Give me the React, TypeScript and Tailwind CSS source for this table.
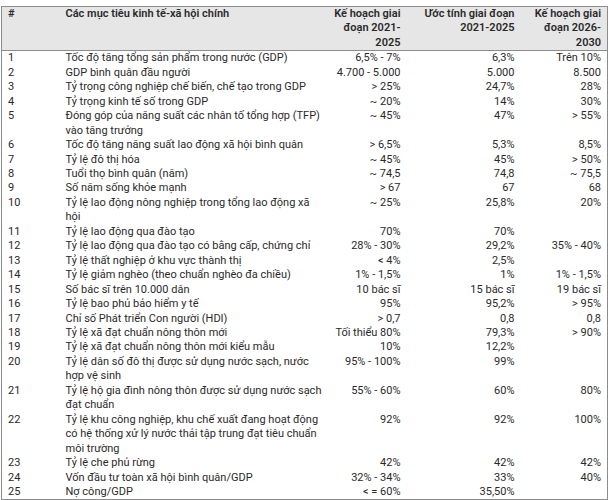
import React from 'react';

type Row = {
  no: number;
  name: string[];
  plan: string;
  est: string;
  next: string;
};

const rows: Row[] = [
  { no: 1, name: ['Tốc độ tăng tổng sản phẩm trong nước (GDP)'], plan: '6,5% - 7%', est: '6,3%', next: 'Trên 10%' },
  { no: 2, name: ['GDP bình quân đầu người'], plan: '4.700 - 5.000', est: '5.000', next: '8.500' },
  { no: 3, name: ['Tỷ trọng công nghiệp chế biến, chế tạo trong GDP'], plan: '> 25%', est: '24,7%', next: '28%' },
  { no: 4, name: ['Tỷ trọng kinh tế số trong GDP'], plan: '~ 20%', est: '14%', next: '30%' },
  { no: 5, name: ['Đóng góp của năng suất các nhân tố tổng hợp (TFP)', 'vào tăng trưởng'], plan: '~ 45%', est: '47%', next: '> 55%' },
  { no: 6, name: ['Tốc độ tăng năng suất lao động xã hội bình quân'], plan: '> 6,5%', est: '5,3%', next: '8,5%' },
  { no: 7, name: ['Tỷ lệ đô thị hóa'], plan: '~ 45%', est: '45%', next: '> 50%' },
  { no: 8, name: ['Tuổi thọ bình quân (năm)'], plan: '~ 74,5', est: '74,8', next: '~ 75,5' },
  { no: 9, name: ['Số năm sống khỏe mạnh'], plan: '> 67', est: '67', next: '68' },
  { no: 10, name: ['Tỷ lệ lao động nông nghiệp trong tổng lao động xã', 'hội'], plan: '~ 25%', est: '25,8%', next: '20%' },
  { no: 11, name: ['Tỷ lệ lao động qua đào tạo'], plan: '70%', est: '70%', next: '' },
  { no: 12, name: ['Tỷ lệ lao động qua đào tạo có bằng cấp, chứng chỉ'], plan: '28% - 30%', est: '29,2%', next: '35% - 40%' },
  { no: 13, name: ['Tỷ lệ thất nghiệp ở khu vực thành thị'], plan: '< 4%', est: '2,5%', next: '' },
  { no: 14, name: ['Tỷ lệ giảm nghèo (theo chuẩn nghèo đa chiều)'], plan: '1% - 1,5%', est: '1%', next: '1% - 1,5%' },
  { no: 15, name: ['Số bác sĩ trên 10.000 dân'], plan: '10 bác sĩ', est: '15 bác sĩ', next: '19 bác sĩ' },
  { no: 16, name: ['Tỷ lệ bao phủ bảo hiểm y tế'], plan: '95%', est: '95,2%', next: '> 95%' },
  { no: 17, name: ['Chỉ số Phát triển Con người (HDI)'], plan: '> 0,7', est: '0,8', next: '0,8' },
  { no: 18, name: ['Tỷ lệ xã đạt chuẩn nông thôn mới'], plan: 'Tối thiểu 80%', est: '79,3%', next: '> 90%' },
  { no: 19, name: ['Tỷ lệ xã đạt chuẩn nông thôn mới kiểu mẫu'], plan: '10%', est: '12,2%', next: '' },
  { no: 20, name: ['Tỷ lệ dân số đô thị được sử dụng nước sạch, nước', 'hợp vệ sinh'], plan: '95% - 100%', est: '99%', next: '' },
  { no: 21, name: ['Tỷ lệ hộ gia đình nông thôn được sử dụng nước sạch', 'đạt chuẩn'], plan: '55% - 60%', est: '60%', next: '80%' },
  { no: 22, name: ['Tỷ lệ khu công nghiệp, khu chế xuất đang hoạt động', 'có hệ thống xử lý nước thải tập trung đạt tiêu chuẩn', 'môi trường'], plan: '92%', est: '92%', next: '100%' },
  { no: 23, name: ['Tỷ lệ che phủ rừng'], plan: '42%', est: '42%', next: '42%' },
  { no: 24, name: ['Vốn đầu tư toàn xã hội bình quân/GDP'], plan: '32% - 34%', est: '33%', next: '40%' },
  { no: 25, name: ['Nợ công/GDP'], plan: '< = 60%', est: '35,50%', next: '' },
];

function Lines({ items }: { items: string[] }) {
  return (
    <>
      {items.map((t, i) => (
        <div key={i} className="whitespace-nowrap">
          {t}
        </div>
      ))}
    </>
  );
}

export default function App() {
  return (
    <div className="w-[615px] h-[500px] bg-white pt-[6px] pl-[1px] font-['Roboto','Noto_Sans',sans-serif] text-[11px] leading-[14.45px] text-[#2a2a2a]">
      <table className="w-[606px] border-collapse border border-[#8c8c8c] table-fixed">
        <colgroup>
          <col className="w-[60px]" />
          <col className="w-[258px]" />
          <col className="w-[86px]" />
          <col className="w-[114px]" />
          <col className="w-[88px]" />
        </colgroup>
        <thead>
          <tr className="bg-[#e6e6e6] border-b border-[#8c8c8c] align-top">
            <th className="text-left font-semibold pl-[6px] pt-0 h-[43px]">#</th>
            <th className="text-left font-semibold pl-[4px]">Các mục tiêu kinh tế-xã hội chính</th>
            <th className="text-right font-semibold pr-[5px]">
              <Lines items={['Kế hoạch giai', 'đoạn 2021-', '2025']} />
            </th>
            <th className="text-right font-semibold pr-[5px]">
              <Lines items={['Ước tính giai đoạn', '2021-2025']} />
            </th>
            <th className="text-right font-semibold pr-[6px]">
              <Lines items={['Kế hoạch giai', 'đoạn 2026-', '2030']} />
            </th>
          </tr>
        </thead>
        <tbody>
          {rows.map((r) => (
            <tr key={r.no} className="align-top">
              <td className="pl-[6px]">{r.no}</td>
              <td className="pl-[4px]">
                <Lines items={r.name} />
              </td>
              <td className="text-right pr-[5px] whitespace-nowrap">{r.plan}</td>
              <td className="text-right pr-[5px] whitespace-nowrap">{r.est}</td>
              <td className="text-right pr-[6px] whitespace-nowrap">{r.next}</td>
            </tr>
          ))}
        </tbody>
      </table>
    </div>
  );
}
